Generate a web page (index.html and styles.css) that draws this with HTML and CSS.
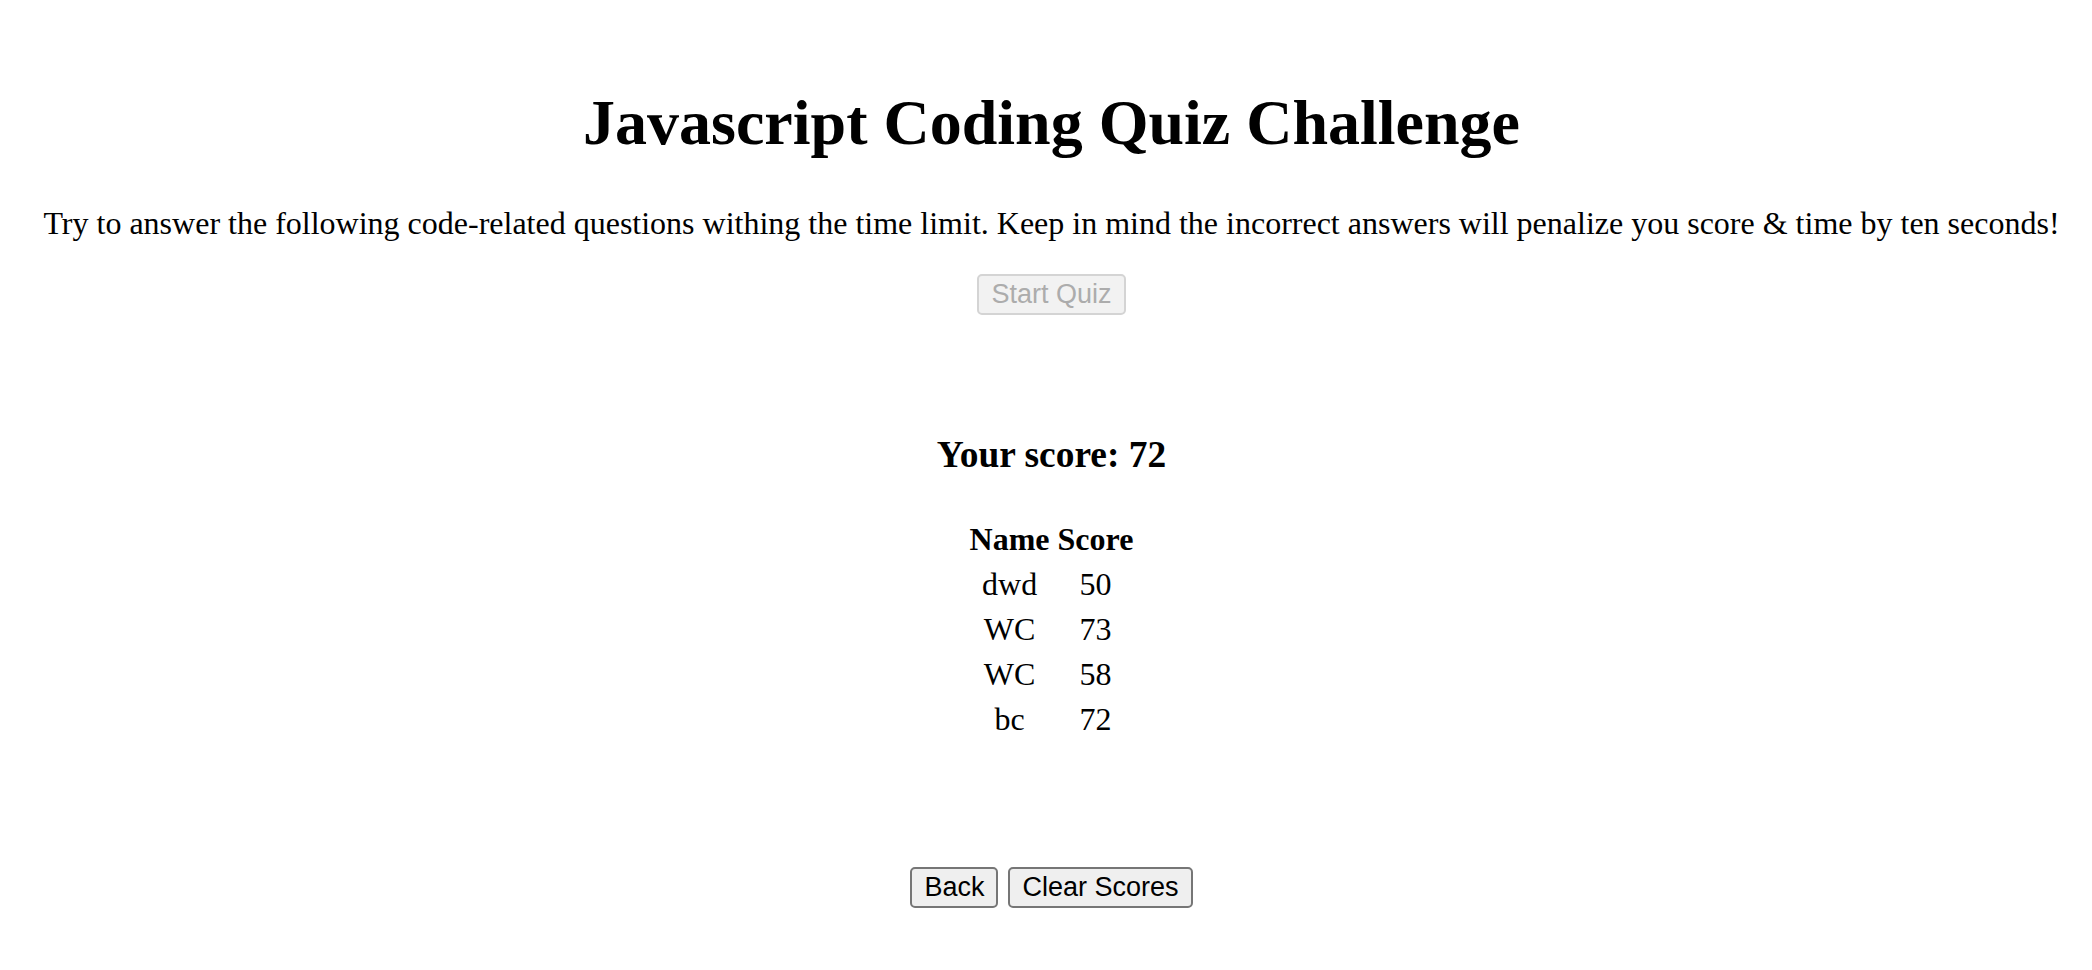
FILE: index.html
```html
<!DOCTYPE html>
<html lang="en">
<head>
<meta charset="utf-8">
<title>Javascript Coding Quiz Challenge</title>
<link rel="stylesheet" href="styles.css">
</head>
<body>
<header class="intro">
  <h1 class="title">Javascript Coding Quiz Challenge</h1>
  <p class="lead">Try to answer the following code-related questions withing the time limit. Keep in mind the incorrect answers will penalize you score &amp; time by ten seconds!</p>
  <button class="btn btn-start" disabled>Start Quiz</button>
</header>
<section class="results">
  <h3 class="score">Your score: 72</h3>
  <table class="scores">
    <thead>
      <tr><th>Name</th><th>Score</th></tr>
    </thead>
    <tbody>
      <tr><td>dwd</td><td>50</td></tr>
      <tr><td>WC</td><td>73</td></tr>
      <tr><td>WC</td><td>58</td></tr>
      <tr><td>bc</td><td>72</td></tr>
    </tbody>
  </table>
</section>
<div class="actions">
  <button class="btn">Back</button>
  <button class="btn">Clear Scores</button>
</div>
</body>
</html>
```

FILE: styles.css
```css
html, body {
  margin: 0;
  padding: 0;
  background: #ffffff;
}
body {
  padding-left: 11px;
  font-family: "Liberation Serif", "Times New Roman", serif;
  font-size: 32px;
  color: #000000;
  text-align: center;
}
.intro {
  padding-top: 86px;
  display: flex;
  flex-direction: column;
  align-items: center;
}
.title {
  margin: 0;
  font-size: 64px;
  line-height: 74px;
  font-weight: bold;
}
.lead {
  margin: 45px 0 32px;
  font-size: 32px;
  line-height: 37px;
}
.btn {
  font-family: "Liberation Sans", Arial, sans-serif;
  font-size: 27px;
  line-height: 31px;
  height: 41px;
  padding: 0 12px;
  margin: 0;
  white-space: nowrap;
  background: #efefef;
  color: #000000;
  border: 2px solid #767676;
  border-radius: 5px;
  box-sizing: border-box;
}
.btn-start {
  background: #f2f2f2;
  color: #acacac;
  border-color: #d4d4d4;
}
.results {
  margin-top: 118px;
}
.score {
  margin: 0;
  font-size: 37.44px;
  line-height: 43px;
  font-weight: bold;
}
.scores {
  margin: 39px auto 0;
  border-spacing: 4px;
  font-size: 32px;
  line-height: 37px;
}
.scores th,
.scores td {
  padding: 2px;
  text-align: center;
}
.actions {
  margin-top: 123px;
  display: flex;
  justify-content: center;
  gap: 10px;
}
```
